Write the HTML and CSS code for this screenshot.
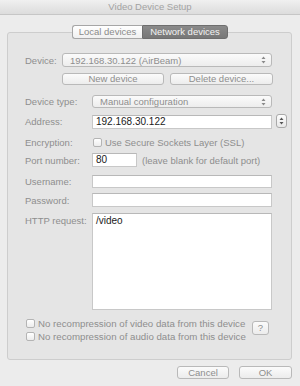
FILE: index.html
```html
<!DOCTYPE html>
<html>
<head>
    <title>Video Device Setup</title>
    <link rel="stylesheet" href="styles.css">
</head>
<body>
    <div class="window">
        <div class="titlebar">Video Device Setup</div>

        <div class="content">
            <div class="tabs">
                <span class="tab">Local devices</span>
                <span class="tab selected">Network devices</span>
            </div>

            <div class="group">
                <div class="row device-row">
                    <span class="label short">Device:</span>
                    <div class="popup wide">
                        <span>192.168.30.122 (AirBeam)</span>
                        <svg class="arrows" width="5" height="8" viewBox="0 0 5 8"><path d="M2.5 0.5 L4.5 3 L0.5 3 Z M2.5 7.5 L4.5 5 L0.5 5 Z" fill="#8a8a8a"/></svg>
                    </div>
                </div>

                <div class="row button-row">
                    <button class="button new-device">New device</button>
                    <button class="button delete-device">Delete device...</button>
                </div>

                <div class="row type-row">
                    <span class="label">Device type:</span>
                    <div class="popup">
                        <span>Manual configuration</span>
                        <svg class="arrows" width="5" height="8" viewBox="0 0 5 8"><path d="M2.5 0.5 L4.5 3 L0.5 3 Z M2.5 7.5 L4.5 5 L0.5 5 Z" fill="#8a8a8a"/></svg>
                    </div>
                </div>

                <div class="row address-row">
                    <span class="label">Address:</span>
                    <div class="field">192.168.30.122</div>
                    <div class="stepper">
                        <svg width="5" height="8" viewBox="0 0 5 8"><path d="M2.5 0.5 L4.5 3 L0.5 3 Z M2.5 7.5 L4.5 5 L0.5 5 Z" fill="#555"/></svg>
                    </div>
                </div>

                <div class="row encryption-row">
                    <span class="label">Encryption:</span>
                    <span class="checkbox"></span>
                    <span class="check-text">Use Secure Sockets Layer (SSL)</span>
                </div>

                <div class="row port-row">
                    <span class="label">Port number:</span>
                    <div class="field port">80</div>
                    <span class="hint">(leave blank for default port)</span>
                </div>

                <div class="row username-row">
                    <span class="label">Username:</span>
                    <div class="field"></div>
                </div>

                <div class="row password-row">
                    <span class="label">Password:</span>
                    <div class="field"></div>
                </div>

                <div class="row http-row">
                    <span class="label">HTTP request:</span>
                    <div class="field textarea">/video</div>
                </div>

                <div class="options">
                    <div class="option-list">
                        <div class="option">
                            <span class="checkbox"></span>
                            <span class="check-text">No recompression of video data from this device</span>
                        </div>
                        <div class="option">
                            <span class="checkbox"></span>
                            <span class="check-text">No recompression of audio data from this device</span>
                        </div>
                    </div>
                    <button class="button help">?</button>
                </div>
            </div>

            <div class="dialog-buttons">
                <button class="button cancel">Cancel</button>
                <button class="button ok">OK</button>
            </div>
        </div>
    </div>
</body>
</html>
```

FILE: styles.css
```css
* {
    box-sizing: border-box;
}
body {
    margin: 0;
    font-family: "Liberation Sans", Arial, sans-serif;
    font-size: 9.5px;
    background-color: #ececec;
    color: #8e8e8e;
}
.window {
    width: 300px;
    height: 386px;
    background-color: #ececec;
}
.titlebar {
    height: 15px;
    line-height: 14px;
    text-align: center;
    color: #a2a2a2;
    background: linear-gradient(#f0f0f0, #dcdcdc);
    border-bottom: 1px solid #c6c6c6;
}
.content {
    padding: 10px 8px 0 7px;
}
.tabs {
    position: relative;
    z-index: 1;
    display: flex;
    justify-content: center;
    margin-left: 1px;
    margin-bottom: -7px;
    height: 14px;
}
.tab {
    height: 14px;
    line-height: 12px;
    padding: 0;
    text-align: center;
    white-space: nowrap;
    border: 1px solid #a6a6a6;
    background: linear-gradient(#ffffff, #f0f0f0);
    color: #8a8a8a;
}
.tab:first-child {
    border-radius: 3px 0 0 3px;
    border-right: none;
    width: 70px;
}
.tab.selected {
    border-radius: 0 3px 3px 0;
    border-color: #6e6e6e;
    background: linear-gradient(#8a8a8a, #777777);
    color: #f2f2f2;
    width: 86px;
}
.group {
    height: 328px;
    padding: 20px 0 0 17px;
    border: 1px solid #cdcdcd;
    border-radius: 3px;
    background-color: #e5e5e5;
}
.row {
    display: flex;
    align-items: center;
}
.label {
    width: 67px;
    flex-shrink: 0;
}
.label.short {
    width: 37px;
}
.popup {
    width: 180px;
    height: 13px;
    display: flex;
    align-items: center;
    justify-content: space-between;
    padding: 0 5px 0 7px;
    border: 1px solid #b9b9b9;
    border-radius: 3px;
    background: linear-gradient(#fbfbfb, #ededed);
    color: #8e8e8e;
}
.popup.wide {
    width: 210px;
    height: 14px;
}
.device-row {
    height: 14px;
}
.button-row {
    margin-top: 6px;
    margin-left: 37px;
    gap: 6px;
}
.button {
    font-family: "Liberation Sans", Arial, sans-serif;
    font-size: 9.5px;
    height: 12px;
    padding: 0;
    line-height: 10px;
    border: 1px solid #b9b9b9;
    border-radius: 3px;
    background: linear-gradient(#fbfbfb, #ececec);
    color: #8e8e8e;
    text-align: center;
}
.new-device {
    width: 102px;
}
.delete-device {
    width: 103px;
}
.type-row {
    margin-top: 10px;
    height: 13px;
}
.address-row {
    margin-top: 7px;
    height: 14px;
    align-items: flex-start;
}
.address-row .label {
    line-height: 14px;
}
.field {
    width: 180px;
    height: 14px;
    line-height: 12px;
    padding: 0 3px;
    border: 1px solid #c8c8c8;
    border-top-color: #b8b8b8;
    background-color: #ffffff;
    color: #1a1a1a;
    font-size: 10px;
}
.stepper {
    width: 11px;
    height: 14px;
    margin: -1px 0 0 4px;
    display: flex;
    align-items: center;
    justify-content: center;
    border: 1px solid #a9a9a9;
    border-radius: 3px;
    background: linear-gradient(#fdfdfd, #e8e8e8);
}
.encryption-row {
    margin-top: 6px;
    height: 14px;
}
.checkbox {
    width: 9px;
    height: 9px;
    margin-left: 1px;
    flex-shrink: 0;
    border: 1px solid #b4b4b4;
    border-radius: 2px;
    background: linear-gradient(#ffffff, #ececec);
}
.check-text {
    margin-left: 3px;
}
.port-row {
    margin-top: 4px;
    height: 14px;
}
.field.port {
    width: 45px;
}
.hint {
    margin-left: 5px;
}
.username-row {
    margin-top: 8px;
}
.username-row .field {
    height: 13px;
}
.password-row {
    margin-top: 5px;
}
.http-row {
    margin-top: 6px;
    align-items: flex-start;
}
.http-row .label {
    margin-top: 2px;
}
.field.textarea {
    height: 97px;
    line-height: 14px;
}
.options {
    display: flex;
    align-items: flex-start;
    margin-top: 6px;
}
.option-list {
    width: 227px;
}
.option {
    display: flex;
    align-items: center;
    height: 14px;
    font-size: 9.7px;
}
.option + .option {
    height: 13px;
}
.button.help {
    width: 17px;
    height: 14px;
    margin-top: 5px;
    line-height: 12px;
}
.dialog-buttons {
    display: flex;
    justify-content: flex-end;
    gap: 10px;
    margin-top: 6px;
}
.cancel {
    width: 52px;
    height: 13px;
    line-height: 11px;
}
.ok {
    width: 53px;
    height: 13px;
    line-height: 11px;
}
```
